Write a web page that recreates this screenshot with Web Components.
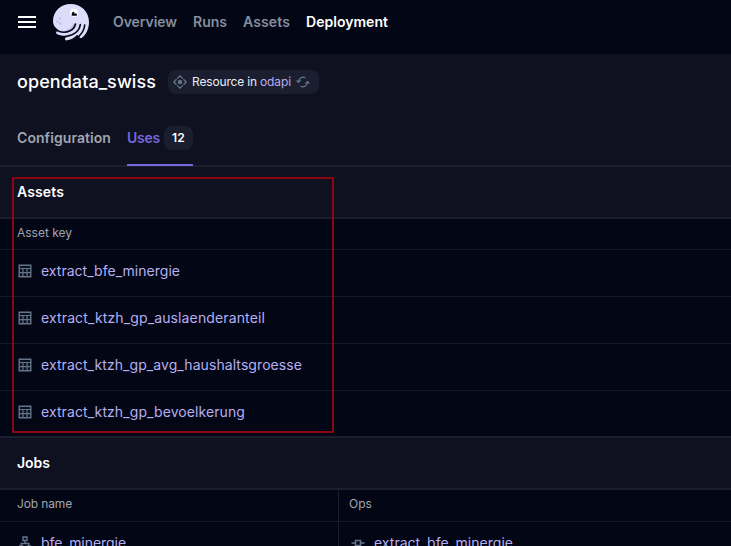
<!DOCTYPE html>
<html lang="en"><head><meta charset="utf-8"><title>opendata_swiss</title>
<style>
html,body{margin:0;height:100%;overflow:hidden;background:#030615}
body{font-family:Inter,"Liberation Sans",sans-serif;font-size:14px;color:#fff}
</style></head><body>
<app-page></app-page>
<script>
const define=(name,html,setup)=>customElements.define(name,class extends HTMLElement{
  connectedCallback(){
    if(this.shadowRoot)return;
    const root=this.attachShadow({mode:'open'});
    root.innerHTML=html;
    if(setup)setup(this,root);
  }
});

/* A label whose tracking is adjusted so it fills a given width. */
define('ui-label',`<style>:host{display:block;white-space:nowrap;line-height:20px}span{display:inline-block}</style><span><slot></slot></span>`,(el,root)=>{
  const w=+el.getAttribute('w'),s=root.querySelector('span'),n=el.textContent.length;
  el.style.width=w+'px';
  s.style.letterSpacing=((w-s.getBoundingClientRect().width)/n).toFixed(3)+'px';
});

const icons={
  menu:`<svg width="18" height="12" viewBox="0 0 18 12" fill="#fff"><path d="M0 0h18v2H0zM0 5h18v2H0zM0 10h18v2H0z"/></svg>`,
  logo:`<svg width="36" height="37" viewBox="0 0 36 37"><path d="M17.500 0C28 0 36 7.500 36 18C36 25 33 31 28.500 34C27.300 34.500 25.800 33.500 26.700 32.200L24 31C21 34 18 36 13.200 36.500C11.500 36 11.700 34 13 33.500L14 31.800C10 32 6 31.500 3.500 29.800C2.500 28.500 3.500 27 5 27.300L6 26.300C2.500 24 0 21.500 0 17C0 7 8 0 17.500 0Z" fill="#dedcfb"/><path d="M6 26.300C13 29 18 24 21.500 18.500C23 23 19 27 14.500 27.800C11 28.500 8 27.500 6 26.300Z" fill="#bfb9f3"/><path d="M5.500 27.300C14 30 21 26.500 22.500 20M13 32.500C21 31 26.500 27 27.300 20.500M25.700 32.500C29 29.500 31.300 26 31.700 21" fill="none" stroke="#030615" stroke-width="1.600" stroke-linecap="round"/><g fill="#c5c0f5"><circle cx="4.500" cy="17.500" r="1.200"/><circle cx="7" cy="14.500" r="1.200"/><circle cx="7.500" cy="19.700" r="1.400"/></g><circle cx="21" cy="9" r="4" fill="#fff"/><path d="M18.700 11.800V9.700a2.300 2.300 0 0 1 2.600-1.900v1.700h2.500v2.300z" fill="#030615"/></svg>`,
  resource:`<svg width="14" height="14" viewBox="0 0 14 14" fill="none" stroke="#667489" stroke-width="1.300"><circle cx="7" cy="7" r="2.200" fill="#667489" stroke="none"/><path d="M4.200 3.600 7 .9 9.800 3.600M10.500 4.300 13.100 7 10.500 9.700M9.800 10.400 7 13.100 4.200 10.400M3.500 9.700.9 7 3.500 4.300"/></svg>`,
  sync:`<svg width="14" height="12" viewBox="0 0 14 12" fill="none" stroke="#667489" stroke-width="1.200"><path d="M9.500 1.700A5 5 0 0 0 2.400 6.200M.4 4.300l2 2.200 2.200-2.200M4.500 10.300a5 5 0 0 0 7.100-4.500M13.600 7.700l-2-2.200-2.200 2.200"/></svg>`,
  table:`<svg width="14" height="14" viewBox="0 0 14 14"><path d="M1.200 1.200h11.600v11.600H1.200z" fill="#0a1020" stroke="#667489" stroke-width="1.400"/><path d="M1 4.500h12M1 8.700h12M4.900 4.700V13M9.100 4.700V13" stroke="#667489" stroke-width="1.200"/></svg>`,
  job:`<svg width="14" height="14" viewBox="0 0 14 14" fill="none" stroke="#667489" stroke-width="1.400"><path d="M5 1h4v3.500H5zM1.700 10h3v3h-3zM9.300 10h3v3h-3zM7 4.500v3M3.200 10V7.500h7.600V10"/></svg>`,
  op:`<svg width="14" height="14" viewBox="0 0 14 14" fill="none" stroke="#667489" stroke-width="1.600"><path d="M4.500 4.500h5v5h-5zM.5 7h4M9.500 7h4"/></svg>`
};
define('ui-icon',`<style>:host{display:flex;flex:none}svg{display:block}</style><div></div>`,(el,root)=>{root.querySelector('div').innerHTML=icons[el.getAttribute('name')]});

define('nav-bar',`<style>
:host{display:flex;align-items:center;box-sizing:border-box;height:54px;padding:0 18px 10px;background:#030615;color:#848f9f;font-weight:600}
.logo{margin:0 24px 0 17px}.links{display:flex;gap:16px}.on{color:#fff}
</style><ui-icon name="menu"></ui-icon><ui-icon class="logo" name="logo"></ui-icon>
<div class="links"><ui-label w="64">Overview</ui-label><ui-label w="34">Runs</ui-label><ui-label w="47">Assets</ui-label><ui-label class="on" w="82">Deployment</ui-label></div>`);

define('resource-tag',`<style>
:host{display:flex;align-items:center;box-sizing:border-box;width:151px;height:24px;padding-left:5px;border-radius:8px;background:#1a1e2e;font-size:12px;font-weight:400;color:#eceef3}
.t{margin-left:5px}.l{color:#b6aff1;margin:0 5px 0 3px}
</style><ui-icon name="resource"></ui-icon><ui-label class="t" w="65">Resource in</ui-label><ui-label class="l" w="31">odapi</ui-label><ui-icon name="sync"></ui-icon>`);

define('page-header',`<style>
:host{display:block;height:111px;background:#0f1120;border-bottom:2px solid #1b1e2d}
.title{display:flex;align-items:center;gap:12px;height:56px;padding-left:17px;font-size:18px;font-weight:500}
.tabs{display:flex;gap:16px;height:56px;padding-left:17px;font-weight:600;color:#a0a5af}
.tab{display:flex;align-items:center;gap:4px}.on{box-sizing:border-box;padding-top:2px;color:#7468dd;border-bottom:2px solid #7468dd;height:56px}
.n{display:flex;align-items:center;justify-content:center;width:29px;height:24px;border-radius:8px;background:#1a1e2e;color:#fff;font-size:12px}
</style><div class="title"><ui-label w="139">opendata_swiss</ui-label><resource-tag></resource-tag></div>
<div class="tabs"><div class="tab"><ui-label w="94">Configuration</ui-label></div><div class="tab on"><ui-label w="33">Uses</ui-label><div class="n"><ui-label w="13">12</ui-label></div></div></div>`);

define('section-head',`<style>:host{display:flex;align-items:center;height:50px;padding-left:17px;background:#0f1120;border-bottom:2px solid #1b1e2d;font-weight:600}</style><slot></slot>`);
define('head-row',`<style>:host{display:flex;height:30px;border-bottom:1px solid #151929;font-size:12px;color:#a0a5af}:host([tall]){height:31px}</style><slot></slot>`);
define('data-row',`<style>:host{display:flex;height:46px;border-bottom:1px solid #151929;color:#b6aff1}:host(:last-child){border:0}</style><slot></slot>`);
define('data-cell',`<style>:host{display:flex;align-items:center;gap:9px;box-sizing:border-box;flex:1;padding:0 0 4px 18px}:host([head]){padding:0 0 3px 17px}:host([split]){flex:none;width:339px;border-right:1px solid #1b1e2d}:host([op]){padding-left:12px}:host([op][head]){padding-left:10px}</style><slot></slot>`);
define('selection-frame',`<style>:host{position:absolute;left:12px;top:177px;width:318px;height:252px;border:2px solid #8b0610;border-radius:1px;pointer-events:none}</style>`);

define('app-page',`<style>
:host{display:block;position:relative;width:731px;height:546px;overflow:hidden;background:#030615}
.assets{box-sizing:border-box;height:219px;border-bottom:2px solid #1b1e2d}
</style><nav-bar></nav-bar><page-header></page-header>
<section-head><ui-label w="47">Assets</ui-label></section-head>
<div class="assets"><head-row><data-cell head><ui-label w="55">Asset key</ui-label></data-cell></head-row>
<data-row><data-cell><ui-icon name="table"></ui-icon><ui-label w="139">extract_bfe_minergie</ui-label></data-cell></data-row>
<data-row><data-cell><ui-icon name="table"></ui-icon><ui-label w="224">extract_ktzh_gp_auslaenderanteil</ui-label></data-cell></data-row>
<data-row><data-cell><ui-icon name="table"></ui-icon><ui-label w="261">extract_ktzh_gp_avg_haushaltsgroesse</ui-label></data-cell></data-row>
<data-row><data-cell><ui-icon name="table"></ui-icon><ui-label w="204">extract_ktzh_gp_bevoelkerung</ui-label></data-cell></data-row></div>
<section-head><ui-label w="33">Jobs</ui-label></section-head>
<head-row tall><data-cell head split><ui-label w="55">Job name</ui-label></data-cell><data-cell head op><ui-label w="23">Ops</ui-label></data-cell></head-row>
<data-row><data-cell split><ui-icon name="job"></ui-icon><ui-label w="85">bfe_minergie</ui-label></data-cell><data-cell op><ui-icon name="op"></ui-icon><ui-label w="139">extract_bfe_minergie</ui-label></data-cell></data-row>
<selection-frame></selection-frame>`);
</script></body></html>
